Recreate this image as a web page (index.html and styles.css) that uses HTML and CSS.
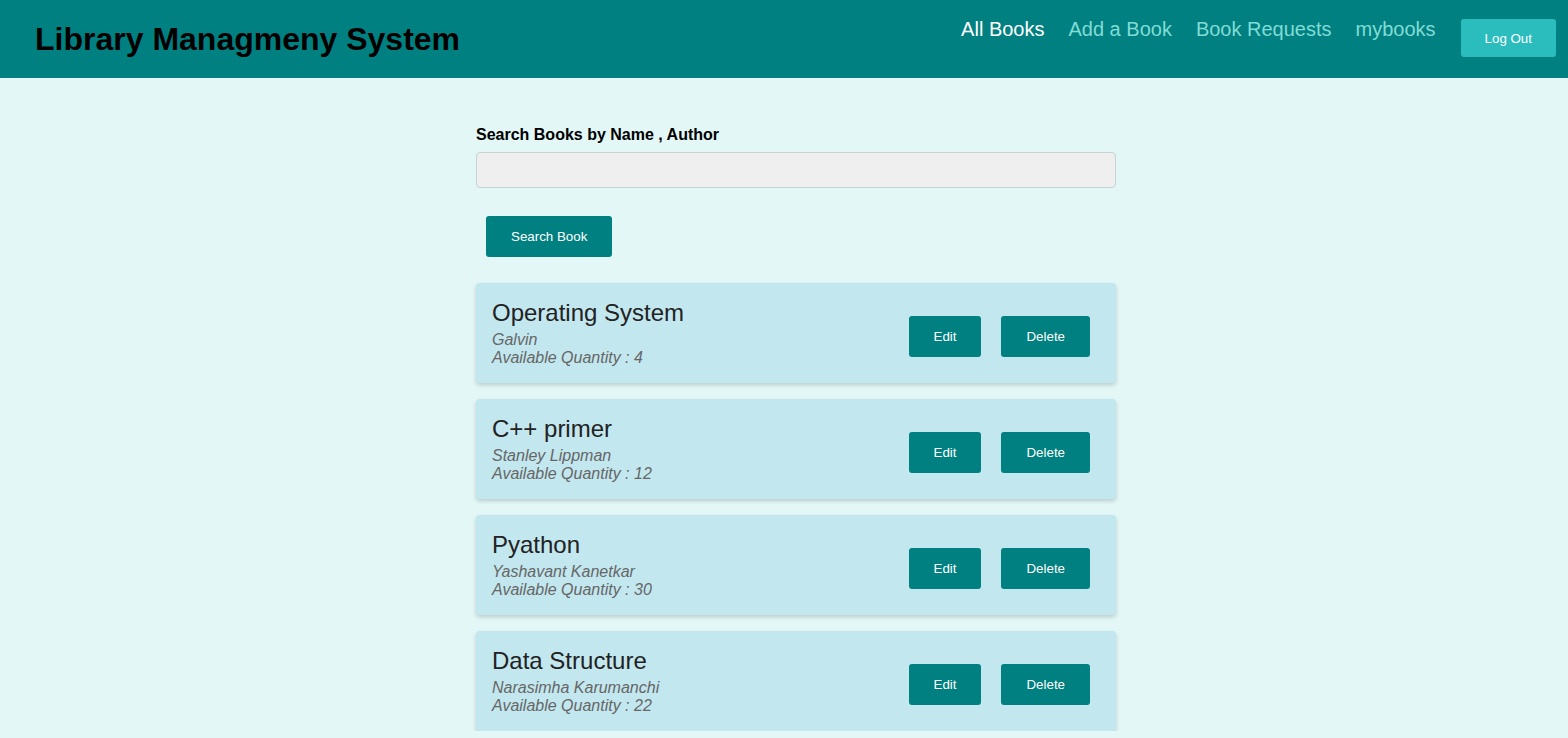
FILE: index.html
```html
<!DOCTYPE html>
<html>
<head>
<meta charset="utf-8">
<title>Library Managmeny System</title>
<link rel="stylesheet" href="styles.css">
</head>
<body>
<header class="topbar">
  <h1 class="brand">Library Managmeny System</h1>
  <nav class="nav">
    <a class="nav-link active" href="#">All Books</a>
    <a class="nav-link" href="#">Add a Book</a>
    <a class="nav-link" href="#">Book Requests</a>
    <a class="nav-link" href="#">mybooks</a>
    <button class="btn btn-logout">Log Out</button>
  </nav>
</header>
<main class="content">
  <label class="search-label" for="q">Search Books by Name , Author</label>
  <input class="search-input" id="q" type="text">
  <button class="btn btn-search">Search Book</button>
  <div class="book-list">
    <div class="book-card">
      <div class="book-info">
        <div class="book-title">Operating System</div>
        <div class="book-meta">Galvin</div>
        <div class="book-meta">Available Quantity : 4</div>
      </div>
      <div class="book-actions">
        <button class="btn">Edit</button>
        <button class="btn">Delete</button>
      </div>
    </div>
    <div class="book-card">
      <div class="book-info">
        <div class="book-title">C++ primer</div>
        <div class="book-meta">Stanley Lippman</div>
        <div class="book-meta">Available Quantity : 12</div>
      </div>
      <div class="book-actions">
        <button class="btn">Edit</button>
        <button class="btn">Delete</button>
      </div>
    </div>
    <div class="book-card">
      <div class="book-info">
        <div class="book-title">Pyathon</div>
        <div class="book-meta">Yashavant Kanetkar</div>
        <div class="book-meta">Available Quantity : 30</div>
      </div>
      <div class="book-actions">
        <button class="btn">Edit</button>
        <button class="btn">Delete</button>
      </div>
    </div>
    <div class="book-card">
      <div class="book-info">
        <div class="book-title">Data Structure</div>
        <div class="book-meta">Narasimha Karumanchi</div>
        <div class="book-meta">Available Quantity : 22</div>
      </div>
      <div class="book-actions">
        <button class="btn">Edit</button>
        <button class="btn">Delete</button>
      </div>
    </div>
  </div>
</main>
</body>
</html>
```
FILE: styles.css
```css
* { box-sizing: border-box; }
html, body {
  margin: 0;
  padding: 0;
  background: #e3f7f7;
  font-family: "Liberation Sans", Arial, sans-serif;
}
.topbar {
  height: 78px;
  background: #008080;
  display: flex;
  justify-content: space-between;
  align-items: center;
  padding: 0 12px 0 35px;
}
.brand {
  margin: 0;
  font-size: 32px;
  font-weight: bold;
  color: #000;
}
.nav {
  align-self: flex-start;
  display: flex;
  align-items: flex-start;
  gap: 24px;
  margin-top: 18px;
}
.nav-link {
  font-size: 20px;
  line-height: 23px;
  color: #80dcd6;
  text-decoration: none;
}
.nav-link.active { color: #ffffff; }
.nav-link:last-of-type { margin-right: 1px; }
.btn {
  height: 41px;
  padding: 0 25px;
  border: none;
  border-radius: 3px;
  background: #008080;
  color: #ffffff;
  font-family: "Liberation Sans", Arial, sans-serif;
  font-size: 13.333px;
  cursor: pointer;
}
.btn-logout {
  margin-top: 1px;
  height: 38px;
  padding: 0 24px;
  background: #2bbdbd;
}
.content {
  width: 640px;
  margin-left: calc(50% - 308px);
  padding-top: 48px;
  display: flex;
  flex-direction: column;
  align-items: flex-start;
}
.search-label {
  font-size: 16px;
  font-weight: bold;
  line-height: 18px;
  color: #000;
}
.search-input {
  margin-top: 8px;
  width: 640px;
  height: 36px;
  background: #efefef;
  border: 1px solid #c5d3d3;
  border-radius: 4px;
}
.btn-search {
  margin: 28px 0 0 10px;
}
.book-list {
  margin-top: 26px;
  width: 640px;
  display: flex;
  flex-direction: column;
  gap: 16px;
}
.book-card {
  height: 100px;
  background: #c2e7ef;
  border-radius: 4px;
  box-shadow: 0 2px 4px rgba(0, 0, 0, 0.18);
  padding: 16px 26px 16px 16px;
  display: flex;
  justify-content: space-between;
  align-items: center;
}
.book-title {
  font-size: 24px;
  line-height: 28px;
  color: #222;
  margin-bottom: 4px;
}
.book-meta {
  font-size: 16px;
  line-height: 18px;
  font-style: italic;
  color: #666;
}
.book-actions {
  display: flex;
  gap: 20px;
  margin-top: 7px;
}
```
